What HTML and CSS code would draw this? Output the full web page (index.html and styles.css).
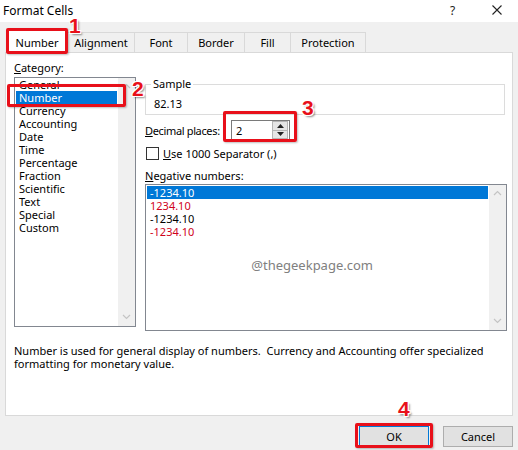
FILE: index.html
```html
<!DOCTYPE html>
<html>
<head>
<meta charset="utf-8">
<link rel="stylesheet" href="styles.css">
</head>
<body>
<div class="dialog">
  <div class="titlebar">
    <span class="title">Format Cells</span>
    <span class="help">?</span>
    <svg class="close" width="10" height="10" viewBox="0 0 10 10"><path d="M0.5 0.5L9.5 9.5M9.5 0.5L0.5 9.5" stroke="#222" stroke-width="1.1" fill="none"/></svg>
  </div>
  <div class="tabs">
    <div class="tab active">Number</div>
    <div class="tab t-align">Alignment</div>
    <div class="tab t-font">Font</div>
    <div class="tab t-border">Border</div>
    <div class="tab t-fill">Fill</div>
    <div class="tab t-prot">Protection</div>
  </div>
  <div class="panel">
    <div class="cols">
      <div class="catcol">
        <div class="label"><u>C</u>ategory:</div>
        <div class="listbox cat">
          <div class="items">
            <div class="item">General</div>
            <div class="item sel">Number</div>
            <div class="item">Currency</div>
            <div class="item">Accounting</div>
            <div class="item">Date</div>
            <div class="item">Time</div>
            <div class="item">Percentage</div>
            <div class="item">Fraction</div>
            <div class="item">Scientific</div>
            <div class="item">Text</div>
            <div class="item">Special</div>
            <div class="item">Custom</div>
          </div>
          <div class="vscroll">
            <svg width="9" height="6" viewBox="0 0 9 6"><path d="M1 5L4.5 1.5L8 5" stroke="#c4c4c4" stroke-width="1.2" fill="none"/></svg>
            <svg width="9" height="6" viewBox="0 0 9 6"><path d="M1 1L4.5 4.5L8 1" stroke="#c4c4c4" stroke-width="1.2" fill="none"/></svg>
          </div>
        </div>
      </div>
      <div class="rightcol">
        <div class="sample">
          <span class="legend">Sample</span>
          <div class="sample-val">82.13</div>
        </div>
        <div class="decrow">
          <span class="declabel"><u>D</u>ecimal places:</span>
          <div class="spin">
            <span class="spin-val">2</span>
            <div class="spinbtns">
              <div class="sbtn"><svg width="7" height="4" viewBox="0 0 7 4"><path d="M0 4L3.5 0L7 4Z" fill="#222"/></svg></div>
              <div class="sbtn"><svg width="7" height="4" viewBox="0 0 7 4"><path d="M0 0L3.5 4L7 0Z" fill="#222"/></svg></div>
            </div>
          </div>
        </div>
        <div class="checkrow">
          <span class="checkbox"></span>
          <span><u>U</u>se 1000 Separator (,)</span>
        </div>
        <div class="label neglabel"><u>N</u>egative numbers:</div>
        <div class="listbox neg">
          <div class="items">
            <div class="item sel">-1234.10</div>
            <div class="item red">1234.10</div>
            <div class="item">-1234.10</div>
            <div class="item red">-1234.10</div>
            <div class="watermark">@thegeekpage.com</div>
          </div>
          <div class="vscroll">
            <svg width="9" height="6" viewBox="0 0 9 6"><path d="M1 5L4.5 1.5L8 5" stroke="#c4c4c4" stroke-width="1.2" fill="none"/></svg>
            <svg width="9" height="6" viewBox="0 0 9 6"><path d="M1 1L4.5 4.5L8 1" stroke="#c4c4c4" stroke-width="1.2" fill="none"/></svg>
          </div>
        </div>
      </div>
    </div>
    <p class="desc">Number is used for general display of numbers.&nbsp; Currency and Accounting offer specialized formatting for monetary value.</p>
  </div>
  <div class="buttons">
    <div class="btn ok">OK</div>
    <div class="btn">Cancel</div>
  </div>

  <div class="annot box1"></div>
  <div class="annot box2"></div>
  <div class="annot box3"></div>
  <div class="annot box4"></div>
  <div class="num n1">1</div>
  <div class="num n2">2</div>
  <div class="num n3">3</div>
  <div class="num n4">4</div>
</div>
</body>
</html>
```

FILE: styles.css
```css
* { box-sizing: border-box; }
html, body { margin: 0; padding: 0; }
body {
  width: 518px;
  height: 450px;
  background: #f0f0f0;
  font-family: "Noto Sans", "Open Sans", sans-serif;
  font-size: 11px;
  color: #000;
  overflow: hidden;
}
.dialog {
  position: relative;
  width: 518px;
  height: 450px;
}
.titlebar {
  height: 22px;
  background: #fff;
  display: flex;
  align-items: center;
  padding: 0 0 2px 3px;
  font-size: 12px;
}
.title { flex: 1; }
.help { width: 12px; margin-right: 30px; color: #222; }
.close { margin-right: 16px; }

.tabs {
  height: 30px;
  display: flex;
  align-items: flex-end;
  padding-left: 6px;
}
.tab {
  height: 20px;
  border: 1px solid #d9d9d9;
  border-bottom: none;
  border-left: none;
  background: #f0f0f0;
  display: flex;
  align-items: center;
  justify-content: center;
}
.tab.active {
  height: 23px;
  width: 62px;
  background: #fff;
  border-left: 1px solid #d9d9d9;
  margin-bottom: -1px;
  position: relative;
  z-index: 1;
}
.t-align { width: 67px; }
.t-font { width: 53px; }
.t-border { width: 57px; }
.t-fill { width: 46px; }
.t-prot { width: 75px; }

.panel {
  margin: 0 5px;
  height: 364px;
  background: #fff;
  border: 1px solid #d9d9d9;
  padding: 6px 0 0 8px;
}
.cols {
  display: flex;
  gap: 9px;
}
.catcol { width: 122px; }
.label { height: 17px; line-height: 17px; }
.label u, .declabel u, .checkrow u { text-decoration: underline; }

.listbox {
  display: flex;
  border: 1px solid #828790;
  background: #fff;
}
.listbox .items { flex: 1; padding: 1px 1px 0 1px; position: relative; }
.listbox .item {
  height: 13px;
  line-height: 13px;
  padding-left: 3px;
  white-space: nowrap;
}
.listbox .item.sel { background: #0078d7; color: #fff; }
.listbox .item.red { color: #d0021b; }
.vscroll {
  width: 17px;
  background: #f0f0f0;
  display: flex;
  flex-direction: column;
  justify-content: space-between;
  align-items: center;
  padding: 5px 0 6px;
}
.cat { height: 250px; margin-top: 1px; }
.cat .items { padding-top: 0; }

.rightcol { width: 362px; }
.sample {
  position: relative;
  margin-top: 25px;
  width: 360px;
  height: 31px;
  border: 1px solid #dcdcdc;
  padding: 12px 0 0 8px;
}
.sample .legend {
  position: absolute;
  top: -9px;
  left: 5px;
  background: #fff;
  padding: 0 2px;
  line-height: 16px;
}
.sample-val { line-height: 14px; }

.decrow {
  display: flex;
  align-items: center;
  margin-top: 5px;
  height: 20px;
}
.declabel { width: 86px; white-space: nowrap; letter-spacing: -0.35px; }
.spin {
  width: 59px;
  height: 20px;
  border: 1px solid #7a7a7a;
  display: flex;
  align-items: center;
  padding-left: 4px;
}
.spin-val { flex: 1; }
.spinbtns {
  width: 16px;
  height: 18px;
  display: flex;
  flex-direction: column;
  margin-right: 1px;
}
.sbtn {
  flex: 1;
  background: #e5e5e5;
  border: 1px solid #b4b4b4;
  display: flex;
  align-items: center;
  justify-content: center;
}
.sbtn + .sbtn { border-top: none; }

.checkrow {
  display: flex;
  align-items: center;
  gap: 4px;
  margin-top: 6px;
  height: 15px;
}
.checkbox {
  width: 13px;
  height: 13px;
  border: 1px solid #333;
  background: #fff;
  margin-left: 1px;
}
.neglabel { margin-top: 6px; }
.neg { height: 147px; width: 362px; }
.neg .items { padding-left: 1px; padding-top: 1px; }
.neg .item { padding-left: 3px; }
.watermark {
  position: absolute;
  right: 116px;
  top: 71px;
  color: #808080;
  font-size: 13px;
  line-height: 18px;
  white-space: nowrap;
}

.desc {
  margin: 13px 0 0 0;
  line-height: 13px;
  width: 480px;
}

.buttons {
  display: flex;
  justify-content: flex-end;
  gap: 14px;
  padding: 10px 5px 0 0;
}
.btn {
  width: 70px;
  height: 21px;
  border: 1px solid #adadad;
  background: #e1e1e1;
  display: flex;
  align-items: center;
  justify-content: center;
}
.btn.ok { border-color: #0078d7; }

.annot {
  position: absolute;
  border: 3px solid #e8101a;
  border-radius: 2px;
  box-shadow: 1px 1px 2px rgba(0,0,0,0.25);
  z-index: 5;
}
.box1 { left: 6px; top: 28px; width: 62px; height: 26px; }
.box2 { left: 7px; top: 84px; width: 119px; height: 23px; }
.box3 { left: 223px; top: 111px; width: 74px; height: 31px; }
.box4 { left: 355px; top: 423px; width: 78px; height: 25px; }

.num {
  position: absolute;
  z-index: 6;
  font-family: "Liberation Sans", Arial, sans-serif;
  font-weight: bold;
  font-size: 21px;
  line-height: 22px;
  color: #e8101a;
  text-shadow: -1px -1px 0 #fff, 1px -1px 0 #fff, -1px 1px 0 #fff, 1px 1px 0 #fff, 2px 2px 2px rgba(0,0,0,0.45);
}
.n1 { left: 69px; top: 15px; }
.n2 { left: 132px; top: 78px; }
.n3 { left: 302px; top: 97px; }
.n4 { left: 398px; top: 398px; }
```
